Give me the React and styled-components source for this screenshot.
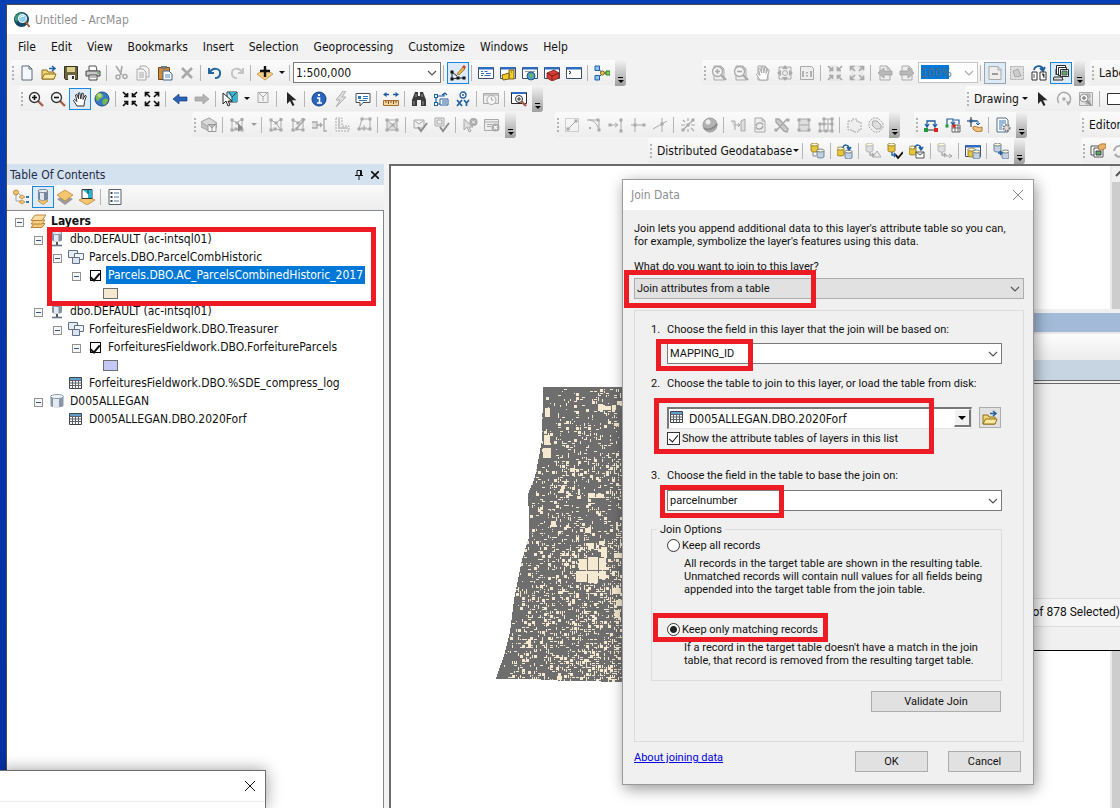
import React from 'react';
import styled, { createGlobalStyle, css } from 'styled-components';

const UI = '"DejaVu Sans Condensed", "Noto Sans", sans-serif';
const DLG = 'Roboto, "Noto Sans", sans-serif';

const Global = createGlobalStyle`
  * { box-sizing: border-box; }
  body { margin: 0; font: 12px/18px ${UI}; color: #111; background: #0538ae; }
  button, input, select { font: inherit; color: inherit; }
`;

/* ---------- icons ---------- */
const G = '#a9a9a9';
const L = '#dedede';
const B = '#1f5f9f';
const K = '#2b2b2b';

const page = (stroke, fill) => <path d="M3 1h7l3 3v11H3zM10 1v3h3" fill={fill} stroke={stroke} />;
const lens = (sign, rim, handle) => (
  <>
    <path d="M10 10l5 5" stroke={handle} strokeWidth="2.4" />
    <circle cx="6.5" cy="6.5" r="5" fill="#f4f4f4" stroke={rim} strokeWidth="1.3" />
    <path d={sign} stroke={rim === G ? G : '#111'} strokeWidth="1.6" />
  </>
);
const hand = (c) => (
  <path d="M5 15L1.500 9.500l1.300-1L5 10.500 3.500 4l1.400-.6L6.700 8 6.300 2l1.500-.2L8.800 8l1-5.800 1.500.2-.3 6 2-4 1.300.6-1.800 5.500L12 15z" fill="#fff" stroke={c} />
);
const inward = (c) => (
  <path d="M1 1l4 4M2 5.500h3.500V2M15 1l-4 4M14 5.500h-3.500V2M1 15l4-4M2 10.500h3.500V14M15 15l-4-4M14 10.500h-3.500V14" fill="none" stroke={c} strokeWidth="1.700" />
);
const outward = (c) => (
  <path d="M6 6L2 2M5.500 1.500h-4v4M10 6l4-4M10.500 1.500h4v4M6 10l-4 4M5.500 14.500h-4v-4M10 10l4 4M10.500 14.500h4v-4" fill="none" stroke={c} strokeWidth="1.700" />
);
const left = (c, s) => <path d="M1 8l6-5v3h8v4H7v3z" fill={c} stroke={s} strokeWidth=".7" />;
const right = (c, s) => <path d="M15 8L9 3v3H1v4h8v3z" fill={c} stroke={s} strokeWidth=".7" />;
const cursor = (c) => <path d="M4 1v12l3-3 2.500 5 2-1L9 9.200h4.500z" fill={c} />;
const win = (inner) => (
  <>
    <path d="M.5 2.500h15v11H.5z" fill="#fff" stroke="#3b4d6b" />
    <path d="M1 2h14v2.500H1z" fill="#2f6cc0" />
    {inner}
  </>
);
const can = (x, y, c, s) => (
  <>
    <path d={`M${x} ${y + 1.500}v6c0 2 7 2 7 0v-6z`} fill={c} stroke={s} strokeWidth=".8" />
    <ellipse cx={x + 3.500} cy={y + 1.500} rx="3.500" ry="1.500" fill="#fff8d8" stroke={s} strokeWidth=".8" />
  </>
);
const Y = ['#e8c63a', '#84691a'];
const S = ['#c3d2e2', '#54687d'];
const GR = [L, G];
const sq = (pts, c, s = 3) => pts.map(([x, y], i) => <rect key={i} x={x - s / 2} y={y - s / 2} width={s} height={s} fill={c} />);
const poly = (extra) => (
  <>
    <path d="M3 3l5 3 5-4 0 11-6-1-4 2z" fill="none" stroke={G} />
    {sq([[3, 3], [8, 6], [13, 2.500], [13, 13], [7, 12], [3, 13]], G)}
    {extra}
  </>
);
const check = (c) => <path d="M6 10l3 4 6-8" fill="none" stroke={c} strokeWidth="2" />;
const crossDot = <><circle cx="11.500" cy="10.500" r="4" fill={G} /><path d="M10 9l3 3M13 9l-3 3" stroke="#fff" strokeWidth="1.200" /></>;
const folder = (
  <>
    <path d="M1 14V5h5l1 2h6v7z" fill="#f1d774" stroke="#8d6f1c" />
    <path d="M1 14l2.500-5H15l-2 5z" fill="#fbe89a" stroke="#8d6f1c" />
    <path d="M8 3.500h5M11 1l3 2.500L11 6" fill="none" stroke={B} strokeWidth="1.500" />
  </>
);
const dbArrow = (c) => <path d="M5 9v3h3M7 10l2 2-2 2" fill="none" stroke={c} strokeWidth="1.300" />;
const loop = <path d="M6 5c0-4 6-4 6 1M10 4l2 3 2-3" fill="none" stroke={B} strokeWidth="1.500" />;

const ICONS = {
  new: <path d="M3 1h7l3 3v11H3zM10 1v3h3" fill="#f4f9ff" stroke="#5c6b7b" />,
  open: folder,
  save: <><path d="M1.500 1.500h13v13h-12l-1-1z" fill="#6d6340" stroke="#37321f" /><path d="M4 2h8v5H4z" fill="#d9cf8f" /><path d="M5 10h7v5H5z" fill="#efefef" /><path d="M9 11h2v3H9z" fill={K} /></>,
  print: <><path d="M4 1h7l1 5H4z" fill="#fff" stroke="#555" /><path d="M1 6h14v5H1z" fill="#c9c9c9" stroke="#444" /><path d="M4 10h8v5H4z" fill="#fff" stroke="#444" /><path d="M5 12h6" stroke="#777" /><path d="M12 8h2" stroke="#3da23d" /></>,
  cut: <><path d="M3 1l6 9M9 1l-1.500 9" stroke={G} strokeWidth="1.600" /><circle cx="5" cy="12" r="2" fill="none" stroke={G} strokeWidth="1.500" /><circle cx="12" cy="11.500" r="2" fill="none" stroke={G} strokeWidth="1.500" /></>,
  copy: <><path d="M5 1h6l3 3v8H5z" fill="#f3f3f3" stroke={G} /><path d="M2 4h6l3 3v8H2z" fill="#f3f3f3" stroke={G} /><path d="M4 8h5M4 10h5M4 12h5" stroke={G} /></>,
  paste: <><path d="M1.500 2.500h11v12h-11z" fill="#cf8a3c" stroke="#74491a" /><path d="M4 1h6v3H4z" fill="#777" /><path d="M6 6h6l3 3v6H6z" fill="#fff" stroke="#3a628e" /><path d="M8 10h5M8 12h5" stroke="#4b86c6" /></>,
  del: <path d="M3 3l10 10M13 3L3 13" stroke={G} strokeWidth="2.600" />,
  undo: <path d="M2 3v5h5M3 7c3-5 11-4 10 2-.2 3-3 4-5 4" fill="none" stroke="#25659f" strokeWidth="2" />,
  redo: <path d="M14 3v5H9M13 7C10 2 2 3 3 9c.2 3 3 4 5 4" fill="none" stroke="#c4c4c4" strokeWidth="2" />,
  add: <><path d="M0 9l8-5 8 5-8 6z" fill="#f6cf86" stroke="#c08a3a" strokeWidth=".8" /><path d="M8 1v11M3 6h10" stroke="#111" strokeWidth="2.400" /></>,
  editor: <><path d="M2 7v7l6-1h6M2 7l5 4" fill="none" stroke="#222" />{sq([[2, 7], [2, 14], [8, 13], [14, 13]], '#111')}<path d="M7 9l6-7 2 2-6 6z" fill="#f0b64b" stroke="#7c5a1c" strokeWidth=".7" /><path d="M12 2l2-2 2 2-1.500 2z" fill="#c94a35" /></>,
  toc: win(<path d="M3 6.500h2M6.500 6.500h3M3 8.500h3M8 8.500h5M3 10.500h2M6.500 10.500h6" stroke="#2f6cc0" strokeWidth="1.200" />),
  catalog: win(<><path d="M9 5h5v9H9z" fill="#f2cb2c" stroke="#7b6413" /><path d="M2 10l7-2v6l-6 1z" fill="#f0c92c" stroke="#7b6413" /><path d="M11 7h1" stroke="#7b6413" /></>),
  search: win(<><path d="M3 6.500h10" stroke="#999" /><circle cx="9" cy="11" r="4" fill="#4a9ad6" stroke="#2a5b86" /><path d="M7 10l3-2 1 3-2 2z" fill="#6dbb4d" /></>),
  toolbox: win(<><path d="M3 8l7-3 5 3v5l-7 3-5-3z" fill="#d23c33" stroke="#7e1a15" strokeWidth=".8" /><path d="M3 8l5 3 7-3M8 11v4" fill="none" stroke="#7e1a15" /></>),
  python: win(<path d="M3 6l2 1.500L3 9" fill="none" stroke="#111" />),
  model: <><path d="M4 4l5 4-5 5M9 8h5" fill="none" stroke="#1a3c66" /><path d="M1 1h4.500v4.500H1zM1 10.500h4.500V15H1z" fill="#8fc2f2" stroke="#1f5fa5" /><circle cx="8.500" cy="8" r="2" fill="#f3c54a" stroke="#80611a" /><path d="M12 6h4v4h-4z" fill="#7fcf63" stroke="#2f7a22" /></>,
  zin: lens('M4 6.500h5M6.500 4v5', '#333', '#a6604b'),
  zout: lens('M4 6.500h5', '#333', '#a6604b'),
  hand: hand('#333'),
  globe: <><circle cx="8" cy="8" r="7" fill="#3479c8" stroke="#1b4a85" /><path d="M4 2c4 0 6 2 5 4S5 7 5 9s-2 1-3-1 0-5 2-6zM10 8c3-1 4 0 4 1s-2 5-4 5-2-5 0-6z" fill="#7bb948" /><circle cx="5.500" cy="4.500" r="2" fill="#fff" opacity=".45" /></>,
  fin: inward('#111'),
  fout: outward('#111'),
  back: left('#2b62b8', '#173f80'),
  fwd: right('#b4b4b4', '#9a9a9a'),
  select: <><path d="M5 1h10v10H5z" fill="#bff0f7" stroke="#333" /><path d="M5 1l5 5v5h5V1z" fill="#31b7d4" /><path d="M7 1l3 5 5-5M10 6v5" fill="none" stroke="#444" /><path d="M1 2v11l3-3 2 5 2-1-2-4h4z" fill="#fff" stroke="#222" /></>,
  clear: <path d="M3 1.500h10v10H3zM4 2l4 4 4-4M8 6v4" fill="#f1f1f1" stroke={G} />,
  pointer: cursor('#262626'),
  info: <><circle cx="8" cy="8" r="7" fill="#2b63c0" stroke="#173c80" /><path d="M6 7h2.500v5M6 12h5" fill="none" stroke="#fff" strokeWidth="1.600" /><path d="M7 3h2v2H7z" fill="#fff" /></>,
  bolt: <path d="M10 0L3 9h4l-4 7 10-10H9l4-6z" fill={L} stroke={G} strokeWidth=".9" />,
  popup: <><path d="M1 2.500h14v9H8L5 15v-3.500H1z" fill="#fff" stroke="#4a5158" /><path d="M3 5h3v3H3z" fill="#2c76bd" /><path d="M8 5.500h5M8 7.500h5M4 9.500h8" stroke="#2c76bd" /></>,
  measure: <><path d="M0 3.500L3.500 1v5zM16 3.500L12.500 1v5z" fill={B} /><path d="M2 3.500h4M10 3.500h4" stroke={B} strokeWidth="1.600" /><path d="M.5 9.500h15v5H.5z" fill="#f6d79d" stroke="#a36d2d" /><path d="M3 10v2M5.500 10v3M8 10v2M10.500 10v3M13 10v2" stroke="#7a4d1a" /></>,
  find: <><path d="M4 1h3v4h2V1h3l3 8v6h-5V9H6v6H1V9z" fill="#3b3b3b" /><path d="M5 3v3M11 3v3M3 10v4M12 10v4" stroke="#9b9b9b" /></>,
  route: <><path d="M3 5v8h4M3 5h8V2M9 4l3-2 2 2" fill="none" stroke={B} strokeWidth="1.200" /><path d="M7 8h8v6H7z" fill="#fff" stroke={B} /><path d="M9 10h5M9 12h5" stroke={B} />{sq([[3, 5], [3, 13]], B, 4)}{sq([[3, 5], [3, 13]], '#fff', 2)}</>,
  xy: <><circle cx="8" cy="4" r="3" fill="#fff" stroke={B} strokeWidth="1.300" /><circle cx="8" cy="4" r="1" fill={B} /><path d="M2 9l5 6M7 9l-5 6M9 9l2.500 3L14 9M11.500 12v3" fill="none" stroke={B} strokeWidth="1.700" /></>,
  time: <><path d="M.5 2.500h15v10H.5zM1 4h14" fill="#eee" stroke={G} /><circle cx="8.500" cy="9" r="4.500" fill="#f5f5f5" stroke={G} /><path d="M8.500 6v3h2" fill="none" stroke={G} /></>,
  viewer: <><path d="M.5 1.500h15v11H.5z" fill="#fff" stroke={K} /><path d="M1 1h14v2H1z" fill="#2f6cc0" /><path d="M10 10l5 5" stroke="#b0563f" strokeWidth="2.400" /><circle cx="8" cy="8" r="3.500" fill="#fff" stroke={K} /><path d="M6 8h4M8 6v4" stroke={K} /></>,
  gpage: <><path d="M0 10l8 4 8-4V6L8 1 0 5z" fill="#c2c2c2" stroke={G} /><path d="M0 5l8-4 8 5-8 4z" fill="#dadada" stroke={G} /><path d="M7 7.500h8v7H7zM8 8l3 3 3-3M11 11v3" fill="#f4f4f4" stroke="#999" /></>,
  edsel: poly(<path d="M9 6v9l5-4z" fill="#888" />),
  ed1: poly(<path d="M8 6l5 7" stroke={G} />),
  ed2: poly(<path d="M15 2L6 12" stroke={G} strokeWidth="1.800" />),
  ed3: <><path d="M0 5h5v6H0z" fill={L} /><path d="M0 5h5v6H0M5 8h5M8 6l2 2-2 2M15 2h-3v12h3" fill="none" stroke={G} strokeWidth="1.300" /></>,
  ed4: <><path d="M2 1v13h13V9H8V1z" fill="none" stroke={G} strokeDasharray="2 1" /><path d="M5 2v9h9" fill="none" stroke="#c6c6c6" strokeWidth="2" /></>,
  ed5: <><path d="M3 12L6 2h8v10H3M8 8v6M5 11h6" fill="none" stroke={G} />{sq([[6, 2], [14, 2], [14, 12], [3, 12]], G)}</>,
  topo: <><path d="M3 3h10v10H3zM3 3l6 5 4-5M3 13l6-5 4 5" fill={L} stroke={G} />{sq([[3, 3], [13, 3], [3, 13], [13, 13], [9, 8]], G)}</>,
  val1: <><path d="M2 3h10v8H2zM3 4l4 3 4-3" fill="#eee" stroke={G} />{check('#8f8f8f')}</>,
  val2: <><path d="M1 1h9v8H1zM3 3h5v4H3z" fill="#eee" stroke={G} />{check('#8f8f8f')}</>,
  err1: <><path d="M2 2v11l3-3 2 5 2-1-2-4h4z" fill={L} stroke={G} /><circle cx="11.500" cy="5" r="4" fill={G} /><path d="M10 3.500l3 3M13 3.500l-3 3" stroke="#fff" /></>,
  err2: <><path d="M.5 2.500h14v11H.5zM1 5h13M3 7.500h5M3 9.500h4" fill="#eee" stroke={G} />{crossDot}</>,
  seg: <><path d="M1.500 1.500h13v13h-13z" fill="none" stroke={G} strokeDasharray="1 1" /><path d="M4 12l8-8" stroke={G} />{sq([[4, 12], [12, 4]], G)}</>,
  arc: <><path d="M1 3c6-1 11 4 12 11M3 3h10v10" fill="none" stroke={G} />{sq([[12, 3], [13, 13]], G)}{sq([[4, 11]], G, 2)}</>,
  ext: <><path d="M1 8h8M7 6l3 2-3 2M13 2v12" fill="none" stroke={G} />{sq([[2, 8], [13, 3], [13, 14]], G)}</>,
  trim: <><path d="M5 1v14M1 8h14" fill="none" stroke={G} />{sq([[5, 8], [14, 8]], G)}</>,
  inter: <><path d="M1 12L15 4M10 1v14" stroke={G} />{sq([[10, 7]], G)}</>,
  explode: <><path d="M1 8h4M11 8h4M8 1v3M8 12v3M3 13L13 3M3 3l2 2M11 11l3 3" stroke={G} strokeWidth="1.200" />{sq([[13, 3], [3, 13], [8, 8]], G)}</>,
  sphere: <><circle cx="8" cy="8" r="7" fill="#b3b3b3" stroke="#9c9c9c" /><path d="M2 11c4 3 10 1 13-4" fill="none" stroke="#8a8a8a" strokeWidth="2" /><circle cx="6" cy="5" r="2.500" fill="#ececec" /></>,
  split: <path d="M1 4h4v9M5 8h5M8 6l2 2-2 2M11 4l4-2v12h-4z" fill={L} stroke={G} />,
  rotpage: <>{page(G, '#efefef')}<path d="M4 9c1-4 6-4 7-1M11 9c-1 4-6 4-7 1" fill="none" stroke={G} strokeWidth="1.500" /></>,
  pencils: <><path d="M2 2h3l9 10-1 3-3-1L2 5zM13 2L3 13" fill="#ccc" stroke={G} strokeWidth="1.500" />{sq([[2, 13], [14, 3]], G)}</>,
  rows: <><path d="M3 2h10v12H3zM3 8h10" fill={L} stroke={G} />{sq([[3, 3], [13, 3], [3, 13], [13, 13]], G)}</>,
  mesh: <><path d="M6 2h8v12M14 2v12H2V7h12M6 2v12M10 2v12" fill="none" stroke={G} />{sq([[6, 2], [14, 2], [2, 7], [6, 7], [14, 7], [2, 14], [8, 14], [14, 14]], G)}</>,
  shape1: <path d="M2 4h4V2h5v3h4v8h-3v2H7v-2H2z" fill="#eee" stroke={G} strokeDasharray="2 1" />,
  shape2: <><path d="M5 1h5l5 5v5l-4 4H6L1 10V5z" fill="#eee" stroke={G} strokeDasharray="2 1" /><path d="M5 4h4l4 4v3l-2 1H8L4 8z" fill={L} stroke={G} /></>,
  adj1: <><path d="M4 10V4h8v6M2 7l2 3 2-3M10 7l2 3 2-3" fill="none" stroke={B} strokeWidth="1.300" /><path d="M4 13h8" stroke="#333" />{sq([[3, 13]], '#1c9b38', 4)}{sq([[13, 13]], '#d22', 4)}</>,
  adj2: <><path d="M2 8V2h6v5M6 5l2 3 2-3M9 3h5v4" fill="none" stroke={B} strokeWidth="1.200" /><path d="M7 8h8v7H7zM7 11h8M10 8v7M13 8v7" fill="#fff" stroke="#666" />{sq([[2, 9]], '#1c9b38')}{sq([[9, 9]], '#d22')}</>,
  adj3: <><path d="M4 0v10M0 4h10" stroke="#222" /><path d="M5 4h6v4M9 6l2 2 2-2" fill="none" stroke={B} /><path d="M6 10c3-2 5 2 9 0v4c-3 1-7 1-9-2z" fill="#f2c27c" stroke="#b17a30" />{sq([[4, 4]], B)}</>,
  script: <><path d="M2 1h9l2 2v12H2z" fill="#fff" stroke="#53708f" /><path d="M4 4h7M4 6h7M4 8h4M4 10h3M4 12h3" stroke="#3274b5" /><circle cx="11.500" cy="11" r="3" fill="#ddd" stroke="#777" strokeWidth="2" strokeDasharray="1.500 1" /></>,
  pzin: <>{page(G, '#eee')}{lens('M4 6.500h5M6.500 4v5', G, G)}</>,
  pzout: <>{page(G, '#eee')}{lens('M4 6.500h5', G, G)}</>,
  phand: <>{page(G, '#eee')}{hand(G)}</>,
  pfull: <><path d="M2 2h12v12H2z" fill="#eee" stroke={G} /><path d="M8 0l3 4H5zM8 16l3-4H5zM0 8l4-3v6zM16 8l-4-3v6z" fill={G} /><circle cx="8" cy="8" r="2.500" fill="none" stroke={G} /></>,
  p11: <><path d="M1.500 1.500h11l2 2v11h-13z" fill="#eee" stroke={G} /><path d="M4 6v6M12 6v6M8 7v1.500M8 10v1.500" stroke={G} strokeWidth="1.800" /></>,
  pin: <>{page(L, '#eee')}{inward(G)}</>,
  pout: <>{page(L, '#eee')}{outward(G)}</>,
  pback: <>{page(G, '#eee')}{left('#b9b9b9', '#999')}</>,
  pfwd: <>{page(G, '#eee')}{right('#b9b9b9', '#999')}</>,
  dframe: <><path d="M2 1.500h9l3 3v10H2zM11 2v3h3" fill="#eee" stroke={G} /><path d="M5 9h6" stroke="#888" strokeWidth="1.600" /></>,
  focus: <><path d="M1.500 1.500h13v13h-13z" fill={L} stroke={G} strokeDasharray="2 1" /><path d="M4 6l5-2 3 7-6 1z" fill="#ccc" stroke={G} /></>,
  swap: <><path d="M3 5c1-5 8-5 9-1M9 3l3 3 2-4" fill="none" stroke={B} strokeWidth="1.800" /><path d="M1 7h5v8H1zM9 7h6v8H9z" fill="#fff" stroke="#333" /><path d="M3 9v4M11 9h2v4" stroke="#555" /></>,
  ddp: <><path d="M3.500 .5h9v9h-9z" fill="#fff" stroke={K} /><path d="M5.500 2.500h8v8h-8z" fill="#fff" stroke={K} /><path d="M7.500 4.500h8v7h-8z" fill="#fff" stroke={K} /><path d="M9 6h5v4H9z" fill="#63ac5a" stroke="#456" /><path d="M3 4v6M1 12h8l1 3H0z" fill="#ddd" stroke={K} /></>,
  rotate: <><path d="M3 12a6.500 6.500 0 1 1 9 1" fill="none" stroke={G} strokeWidth="1.500" /><path d="M10 10l5 1-3 4z" fill={G} />{sq([[8, 8]], G)}</>,
  gridzoom: <><path d="M1.500 1.500h13v13h-13z" fill="#e5e5e5" stroke={G} /><path d="M8 3h4v4H8zM8 9h4v4H8z" fill="#bbb" stroke={G} /><circle cx="6" cy="7" r="4" fill="#f2f2f2" stroke="#999" /><path d="M4 7h4M6 5v4M9 10l4 4" stroke="#888" strokeWidth="1.500" /></>,
  square: <path d="M1.500 2.500h13v11h-13z" fill="#fff" stroke="#333" />,
  g1: <>{can(2, 0, ...Y)}{can(8, 6, ...S)}<path d="M4 9v4h3" fill="none" stroke="#888" /></>,
  g2: <>{can(0, 4, ...Y)}{can(8, 7, ...S)}{loop}</>,
  g3: <>{can(1, 0, ...GR)}{dbArrow(G)}<path d="M12 8l4 6H8z" fill="#eee" stroke={G} /></>,
  g4: <>{can(1, 0, ...Y)}{dbArrow(B)}<path d="M9 12l2 3 5-6" fill="none" stroke="#111" strokeWidth="1.800" /></>,
  g5: <>{can(0, 3, ...Y)}{loop}<path d="M7 9h8v6H7zM7 9l4 3 4-3" fill="#fff" stroke="#555" /></>,
  g6: <>{can(1, 0, ...GR)}{dbArrow(G)}<path d="M9 13h6M12 11l3 2-3 2" fill="none" stroke={G} /></>,
  g7: win(<>{can(3, 5, ...Y)}{can(8, 7, ...S)}</>),
  g8: <>{can(1, 0, ...S)}{can(9, 7, ...S)}<path d="M5 10h4M7 8l2 2-2 2" fill="none" stroke={B} strokeWidth="1.500" /></>,
  pages: <><path d="M1 3h8v9H1z" fill="#fff" stroke="#555" /><path d="M4 5h9v9H4z" fill="#fff" stroke="#555" /><path d="M6 8h5v4H6z" fill="#5ca95a" stroke="#345" /><path d="M8 3c3-3 5-2 8-2v4c-3 1-4 3-7 2z" fill="#e9b26b" stroke="#935b1b" strokeWidth=".7" /></>,
  refresh: <path d="M2 8c1-6 9-7 11-2M14 2v5H9M14 9c-2 6-9 6-11 2" fill="none" stroke={G} strokeWidth="2" />,
  byorder: <><path d="M3 6v6h5M6 5l4 3" fill="none" stroke="#98a7b5" /><circle cx="3" cy="3.500" r="2.500" fill="#f5c56f" stroke="#bd8a3b" /><path d="M6 8l3-2 3 2-3 2zM6 13l3-2 3 2-3 2z" fill="#f5c56f" stroke="#bd8a3b" strokeWidth=".8" /><path d="M13 8h3M13 13h3" stroke="#2476c0" strokeWidth="2" /></>,
  bysource: <><path d="M3 12l5 3.500 5-3.500-2-2H5z" fill="#f5c56f" stroke="#bd8a3b" strokeWidth=".8" /><path d="M3 2v8c0 2 10 2 10 0V2z" fill="#76869a" /><path d="M5 3v7.500c1 .6 3 .6 4 .6V3z" fill="#dfe6ee" /><ellipse cx="8" cy="2" rx="5" ry="1.600" fill="#eef2f7" stroke="#76869a" /></>,
  byvis: <><path d="M0 10l8-4 8 4-8 6z" fill="#9a9a9a" /><path d="M0 6l8-5 8 5-8 6z" fill="#f5c56f" stroke="#bd8a3b" strokeWidth=".8" /></>,
  bysel: <><path d="M0 11l8-4 8 4-8 5z" fill="#f5c56f" stroke="#bd8a3b" strokeWidth=".8" /><path d="M3 .5h10v9H3z" fill="#fff" stroke="#333" /><path d="M4 1l5 4v4h4V1z" fill="#26b5d0" /><path d="M9 5V1" stroke="#333" /></>,
  options: <><path d="M2 .5h12v15H2z" fill="#fff" stroke="#555f6b" /><path d="M7 4h5M7 8h5M7 12h5" stroke="#4a78a8" />{sq([[4.500, 4], [4.500, 8], [4.500, 12]], '#444', 2)}</>,
  layers: <><path d="M1 14.500l3-4h11l-3 4z" fill="#f4c777" stroke="#b37f2e" strokeWidth=".9" /><path d="M1 11l3-4h11l-3 4z" fill="#f7cf85" stroke="#b37f2e" strokeWidth=".9" /><path d="M1 7.500l4-5.500h11l-4 5.500z" fill="#fbdca0" stroke="#b37f2e" strokeWidth=".9" /></>,
  sde: <><path d="M3 2v7c0 2 10 2 10 0V2z" fill="#8291a3" /><path d="M5 2v8c1 .6 3 .6 4.500 .6V2z" fill="#e3e9f0" /><ellipse cx="8" cy="2" rx="5" ry="1.500" fill="#f2f5f8" stroke="#8291a3" /><path d="M8 11v3" stroke="#555" strokeWidth="2" /><path d="M3 14.500h10" stroke="#68747f" strokeWidth="1.600" /></>,
  fds: <><path d="M.5 1.500h9v7h-9z" fill="#e6ecf4" stroke="#5f7187" /><path d="M6.500 4.500h9v6h-9z" fill="#f1f5fa" stroke="#5f7187" /><path d="M4.500 8.500h7v6h-7z" fill="#dbe4ef" stroke="#5f7187" /></>,
  table: <><path d="M1.500 2.500h12v11h-12z" fill="#fff" stroke="#3f4449" /><path d="M2 3h11v2H2z" fill="#5fa0cf" /><path d="M1.500 5.500h12M1.500 8h12M1.500 10.500h12M4.500 5v8M7.500 5v8M10.500 5v8" stroke="#5c6268" /></>,
  db: <><path d="M1.500 3.500v9c0 2.500 13 2.500 13 0v-9z" fill="#8796a8" /><path d="M4 4v10c2 .7 4 .7 6 .5V4z" fill="#e3e9f0" /><ellipse cx="8" cy="3.500" rx="6.500" ry="2" fill="#f4f7fa" stroke="#8796a8" /></>,
};

const Svg = styled.svg`
  display: block;
  flex: none;
  width: 16px;
  height: 16px;
`;
const Icon = ({ name }) => <Svg viewBox="0 0 16 16" aria-hidden="true">{ICONS[name]}</Svg>;
const ChevronSvg = styled.svg`
  position: absolute;
  right: 4px;
  top: 50%;
  width: 10px;
  height: 6px;
  margin-top: -3px;
  pointer-events: none;
`;
const Chevron = ({ color = '#555' }) => (
  <ChevronSvg viewBox="0 0 10 6" aria-hidden="true"><path d="M1 1l4 4 4-4" fill="none" stroke={color} strokeWidth="1.200" /></ChevronSvg>
);

/* ---------- window frame ---------- */
const Desktop = styled.div`
  position: relative;
  display: flex;
  min-height: 100vh;
  padding: 4px 0 0 6px;
  overflow: hidden;
  background: linear-gradient(#0740b5, #0436ab 40%, #0330a0);
`;
const MainWindow = styled.main`
  display: flex;
  flex: 1;
  flex-direction: column;
  min-width: 0;
  border: solid #4a4a4a;
  border-width: 1px 0 0 1px;
  background: #f2f2f2;
`;
const TitleBar = styled.header`
  display: flex;
  align-items: center;
  gap: 5px;
  height: 29px;
  padding-left: 7px;
  color: #8f8f8f;
  background: #fff;
`;
const Logo = styled.svg`
  width: 16px;
  height: 16px;
`;
const MenuBar = styled.nav`
  display: flex;
  align-items: center;
  height: 26px;
  padding-left: 3px;
`;
const MenuButton = styled.button`
  padding: 0 7px 0 8px;
  border: 0;
  background: none;
`;

/* ---------- toolbars ---------- */
const Toolbars = styled.div`
  display: flex;
  flex-direction: column;
  overflow: hidden;
`;
const ToolbarRow = styled.div`
  display: flex;
  height: 26px;
  padding-left: ${(p) => p.$indent}px;
`;
const Strip = styled.div`
  display: flex;
  flex: none;
  align-items: center;
  height: 25px;
  margin-right: ${(p) => p.$after || 0}px;
  border-radius: 3px;
  background: linear-gradient(#fbfbfb, #ededed);
`;
const Grip = styled.span`
  width: 2px;
  height: 14px;
  margin: 0 2px;
  background: repeating-linear-gradient(#b4b4b4 0 2px, transparent 2px 4px);
`;
const ToolButton = styled.button`
  display: grid;
  flex: none;
  place-items: center;
  width: 22px;
  height: 22px;
  padding: 0;
  border: 1px solid ${(p) => (p.$on ? (p.$dim ? '#9aa5af' : '#1a86dc') : 'transparent')};
  background: ${(p) => (p.$on ? '#dcebf7' : 'none')};
`;
const Separator = styled.span`
  width: 1px;
  height: 16px;
  margin: 0 3px 0 2px;
  background: #b5b5b5;
`;
const ArrowButton = styled.button`
  flex: none;
  width: 11px;
  height: 22px;
  padding: 0;
  border: 0;
  background: none;
  &::before {
    content: '';
    display: block;
    width: 0;
    margin: 0 auto;
    border: 3px solid transparent;
    border-top-color: ${(p) => (p.$dim ? '#9a9a9a' : '#111')};
    border-bottom: 0;
  }
`;
const Overflow = styled.button`
  align-self: flex-start;
  width: 11px;
  height: 26px;
  margin-left: 2px;
  padding: 0;
  border: 0;
  border-radius: 0 3px 3px 0;
  background: linear-gradient(#f2f2f2, #9f9f9f);
  &::before {
    content: '';
    display: block;
    width: 5px;
    height: 1px;
    margin: 13px auto 2px;
    background: #000;
  }
  &::after {
    content: '';
    display: block;
    width: 0;
    margin: 0 auto;
    border: 3px solid transparent;
    border-top-color: #000;
    border-bottom: 0;
  }
`;
const LabelButton = styled.button`
  display: flex;
  align-items: center;
  gap: ${(p) => (p.$tight ? 1 : 3)}px;
  height: 22px;
  padding: 0 ${(p) => (p.$tight ? 1 : 3)}px 0 3px;
  border: 0;
  background: none;
  white-space: nowrap;
  &::after {
    content: '';
    border: 3px solid transparent;
    border-top-color: #111;
    border-bottom: 0;
  }
`;
const ComboBox = styled.div`
  position: relative;
  flex: none;
  width: ${(p) => p.$w}px;
  height: 21px;
  & > select, & > input {
    display: block;
    width: 100%;
    height: 100%;
    padding: 0 2px;
    border: 1px solid ${(p) => (p.$dim ? '#c4c4c4' : '#7a7a7a')};
    border-radius: 0;
    appearance: none;
    color: ${(p) => (p.$dim ? '#5b6b80' : '#111')};
    background: #fff;
  }
  & > input {
    background: linear-gradient(#0078d7, #0078d7) 2px 2px / 28px 14px no-repeat, #fff;
  }
`;

function Tools({ items }) {
  return items.map((it, i) => {
    if (React.isValidElement(it)) return React.cloneElement(it, { key: i });
    if (it === '|') return <Separator key={i} />;
    if (it === '>' || it === '>g') return <ArrowButton key={i} aria-label="More" $dim={it === '>g'} />;
    if (it === '>>') return <Overflow key={i} aria-label="Toolbar options" />;
    const on = it[0] === '*' || it[0] === '~';
    const name = on ? it.slice(1) : it;
    return <ToolButton key={i} aria-label={name} $on={on} $dim={it[0] === '~'}><Icon name={name} /></ToolButton>;
  });
}
const Toolbar = ({ items, after }) => (
  <Strip role="toolbar" $after={after}><Grip /><Tools items={items} /></Strip>
);
const ScaleBox = () => (
  <ComboBox $w={148}>
    <select aria-label="Map scale" defaultValue="1:500,000"><option>1:500,000</option></select>
    <Chevron />
  </ComboBox>
);
const ZoomBox = () => (
  <ComboBox $w={60} $dim>
    <input aria-label="Page zoom" defaultValue="100%" />
    <Chevron color="#aaa" />
  </ComboBox>
);

/* ---------- table of contents ---------- */
const Workspace = styled.div`
  display: flex;
  flex: 1;
  min-height: 0;
`;
const Toc = styled.aside`
  display: flex;
  flex: none;
  flex-direction: column;
  width: 377px;
  margin-right: 5px;
`;
const TocHeader = styled.div`
  display: flex;
  align-items: center;
  height: 21px;
  padding: 0 1px 0 3px;
  color: #1d2b45;
  background: #d4e2f0;
`;
const TocTitle = styled.span`
  flex: 1;
`;
const HeaderButton = styled.button`
  display: grid;
  place-items: center;
  width: 16px;
  height: 16px;
  padding: 0;
  border: 0;
  background: none;
`;
const Glyph = styled.svg`
  display: block;
  width: ${(p) => p.$s || 10}px;
  height: ${(p) => p.$s || 10}px;
`;
const TocTools = styled.div`
  display: flex;
  align-items: center;
  height: 25px;
  padding: 0 0 1px 3px;
  background: linear-gradient(#fafafa, #ededed);
`;
const Tree = styled.div`
  position: relative;
  flex: 1;
  padding-top: 1px;
  border: 1px solid #828790;
  border-width: 1px 1px 0 0;
  background: #fff;
`;
const TreeRow = styled.div`
  display: flex;
  align-items: center;
  height: 18px;
  padding-left: ${(p) => 8 + 19 * p.$depth}px;
  white-space: nowrap;
`;
const Expander = styled.button`
  width: 9px;
  height: 9px;
  margin: 2px 6px 0 0;
  padding: 0;
  border: 1px solid #919191;
  background: #f7f7f7;
  visibility: ${(p) => (p.$hidden ? 'hidden' : 'visible')};
  &::before {
    content: '';
    display: block;
    height: 1px;
    margin: 0 1px;
    background: #33558a;
  }
`;
const RowLabel = styled.label`
  margin-left: 3px;
  padding: 0 2px;
  ${(p) => p.$bold && css`font-weight: bold;`}
  ${(p) => p.$selected && css`color: #fff; background: #0078d7;`}
`;
const CheckBox = styled.input`
  appearance: none;
  flex: none;
  width: ${(p) => (p.$thin ? 13 : 11)}px;
  height: ${(p) => (p.$thin ? 13 : 11)}px;
  margin: 0;
  border: 1px solid ${(p) => (p.$thin ? '#333' : '#000')};
  background: #fff;
  &:checked::before {
    content: '';
    display: block;
    width: 4px;
    height: 8px;
    margin: 0 auto;
    border: solid #111;
    border-width: 0 ${(p) => (p.$thin ? 1 : 2)}px ${(p) => (p.$thin ? 1 : 2)}px 0;
    transform: rotate(40deg);
  }
`;
const CheckCell = styled.span`
  display: grid;
  place-items: center;
  width: 16px;
`;
const Swatch = styled.span`
  width: 15px;
  height: 11px;
  margin-left: 31px;
  border: 1px solid #6e6e6e;
  background: ${(p) => p.$color};
`;
const Highlight = styled.div`
  position: absolute;
  left: ${(p) => p.$box[0]}px;
  top: ${(p) => p.$box[1]}px;
  width: ${(p) => p.$box[2]}px;
  height: ${(p) => p.$box[3]}px;
  border: 5px solid #ed1c24;
  pointer-events: none;
`;

const TREE = [
  { d: 0, icon: 'layers', text: 'Layers', bold: true },
  { d: 1, icon: 'sde', text: 'dbo.DEFAULT (ac-intsql01)' },
  { d: 2, icon: 'fds', text: 'Parcels.DBO.ParcelCombHistoric' },
  { d: 3, check: true, text: 'Parcels.DBO.AC_ParcelsCombinedHistoric_2017', selected: true },
  { d: 3, swatch: '#f5ead1' },
  { d: 1, icon: 'sde', text: 'dbo.DEFAULT (ac-intsql01)' },
  { d: 2, icon: 'fds', text: 'ForfeituresFieldwork.DBO.Treasurer' },
  { d: 3, check: true, text: 'ForfeituresFieldwork.DBO.ForfeitureParcels' },
  { d: 3, swatch: '#c3c8f6' },
  { d: 2, icon: 'table', text: 'ForfeituresFieldwork.DBO.%SDE_compress_log', leaf: true },
  { d: 1, icon: 'db', text: 'D005ALLEGAN' },
  { d: 2, icon: 'table', text: 'D005ALLEGAN.DBO.2020Forf', leaf: true },
];
function TreeItem({ item, id }) {
  if (item.swatch) return <TreeRow $depth={item.d}><Swatch $color={item.swatch} /></TreeRow>;
  return (
    <TreeRow $depth={item.d}>
      <Expander aria-label="Collapse" $hidden={item.leaf} />
      {item.check ? <CheckCell><CheckBox id={id} type="checkbox" defaultChecked /></CheckCell> : <Icon name={item.icon} />}
      <RowLabel as={item.check ? 'label' : 'span'} htmlFor={item.check ? id : undefined} $bold={item.bold} $selected={item.selected}>{item.text}</RowLabel>
    </TreeRow>
  );
}

/* ---------- map ---------- */
const MapPane = styled.section`
  display: flex;
  flex: 1;
  min-width: 0;
  border: solid #6b6b6b;
  border-width: 2px 0 0 2px;
  background: #fff;
`;
const MapCanvas = styled.div`
  flex: 1;
  min-width: 0;
  overflow: hidden;
  padding: 214px 0 0 99px;
`;
const ParcelSvg = styled.svg`
  display: block;
  width: 200px;
  height: 310px;
`;
const ScrollBar = styled.div`
  flex: none;
  width: 10px;
  border-left: 2px solid #e8e8e8;
  background: #cdcdcd;
  overflow: hidden;
`;
const ScrollUp = styled.button`
  display: block;
  width: 17px;
  height: 16px;
  padding: 0 0 0 3px;
  border: 0;
  background: #f0f0f0;
`;

const BLOCKS = [
  [579, 559, 8, 11], [588, 557, 10, 13], [599, 558, 7, 12], [576, 571, 11, 11], [588, 571, 10, 12], [599, 571, 7, 8],
  [601, 547, 6, 10], [599, 541, 5, 4], [544, 435, 6, 10], [545, 408, 5, 9], [543, 448, 8, 10], [588, 543, 6, 6],
  [588, 493, 7, 5], [596, 494, 8, 4], [614, 553, 8, 5], [612, 588, 9, 6], [616, 600, 6, 6], [615, 610, 5, 8], [585, 528, 6, 5],
  [577, 496, 4, 3], [578, 489, 2, 6], [558, 491, 6, 2], [561, 486, 3, 5], [551, 521, 5, 6], [570, 468, 5, 4], [598, 404, 5, 7],
  [601, 406, 10, 4], [612, 405, 4, 5], [617, 401, 5, 4], [616, 522, 2, 8], [557, 676, 5, 4], [528, 640, 3, 8],
];
function parcels() {
  let seed = 20177;
  const rnd = () => { seed = (seed * 16807) % 2147483647; return seed / 2147483647; };
  let d = '';
  for (let y = 389; y < 680; y += 2) {
    for (let x = 498; x < 700; x += 2) {
      const south = (y - 387) / 294;
      const coast = 542 - 44 * south;
      const inland = Math.min(1, Math.max(0, (x - coast) / 60));
      const patch = 0.5 + 0.5 * Math.sin(x / 9 + Math.cos(y / 13) * 2) * Math.cos(y / 11 - x / 23);
      const p = 0.04 + 0.2 * south * Math.min(1, inland * 3) + 0.34 * inland * patch;
      if (rnd() < p) {
        const wide = rnd();
        const w = wide < 0.4 ? 3 : 1;
        const h = rnd() < 0.3 ? 3 : wide > 0.7 ? 2 : 1;
        d += `M${x} ${y}h${w}v${h}h-${w}z`;
      }
    }
  }
  BLOCKS.forEach(([x, y, w, h]) => { d += `M${x} ${y}h${w}v${h}h-${w}z`; });
  return d;
}
const PARCELS = parcels();
const COUNTY = 'M543 387H690V682H601V681H558V680L523 679H496L498 672 504 656 510 632 514 600 517 585 522 560 529 537V518L528 494 535 477 538 462 542 440Z';

/* ---------- attribute table window ---------- */
const TableWindow = styled.section`
  position: absolute;
  left: 800px;
  right: 0;
  top: 309px;
  border-bottom: 1px solid #000;
  background: #f0f0f0;
  white-space: nowrap;
`;
const TableCaption = styled.div`
  height: 19px;
  margin-top: 4px;
  background: #a3bbd8;
`;
const TableTools = styled.div`
  height: 28px;
  border-top: 2px solid #e9e9e9;
  background: linear-gradient(#fdfdfd, #ececec);
`;
const TableTab = styled.div`
  height: 20px;
  background: #c7d4e1;
`;
const TableBody = styled.div`
  height: 218px;
  border-top: 4px double #686868;
`;
const TableStatus = styled.div`
  height: 29px;
  padding-top: 4px;
  border: solid #dcdcdc;
  border-width: 1px 0;
  font-family: ${DLG};
  text-align: right;
  background: #f5f5f5;
`;
const TableFoot = styled.div`
  height: 23px;
`;

/* ---------- join dialog ---------- */
const Dialog = styled.section`
  position: absolute;
  left: 622px;
  top: 179px;
  width: 412px;
  border: 1px solid #9a9a9a;
  font: 11px/13px ${DLG};
  background: #f0f0f0;
  box-shadow: 2px 4px 14px rgba(0, 0, 0, 0.4);
`;
const DialogHeader = styled.header`
  display: flex;
  align-items: center;
  justify-content: space-between;
  height: 30px;
  padding: 0 7px 0 8px;
  font: 12px/18px ${UI};
  color: #8f8f8f;
  background: #fff;
`;
const DialogBody = styled.form`
  padding: 12px 9px 12px 11px;
`;
const Text = styled.p`
  margin: 0 0 ${(p) => p.$after || 0}px;
`;
const FieldLabel = styled.label`
  display: block;
  margin: ${(p) => p.$before || 0}px 0 ${(p) => p.$after || 0}px;
`;
const StepLabel = styled(FieldLabel)`
  display: grid;
  grid-template-columns: 16px 1fr;
`;
const SelectBox = styled.div`
  position: relative;
  height: 21px;
  margin-left: ${(p) => (p.$inset ? 16 : 0)}px;
  & > select {
    display: block;
    width: 100%;
    height: 100%;
    padding: 0 2px;
    border: 1px solid ${(p) => (p.$inset ? '#7a7a7a' : '#adadad')};
    border-radius: 0;
    appearance: none;
    background: ${(p) => (p.$inset ? '#fff' : '#e1e1e1')};
  }
`;
const Panel = styled.div`
  margin-top: 11px;
  padding: 12px 21px 29px 16px;
  border: 1px solid #dcdcdc;
`;
const TablePick = styled.div`
  display: flex;
  gap: 7px;
  margin-left: 16px;
`;
const TableSelect = styled.div`
  position: relative;
  flex: 1;
  height: 22px;
  font: 12px/18px ${UI};
  & > select {
    display: block;
    width: 100%;
    height: 100%;
    padding: 0 20px 0 20px;
    border: solid;
    border-width: 2px 1px 1px 2px;
    border-color: #777 #e3e3e3 #e3e3e3 #777;
    border-radius: 0;
    appearance: none;
    background: #fff;
  }
  & > svg {
    position: absolute;
    left: 2px;
    top: 2px;
    pointer-events: none;
  }
`;
const DropFace = styled.span`
  position: absolute;
  right: 1px;
  top: 2px;
  display: grid;
  place-items: center;
  width: 17px;
  height: 18px;
  border: solid;
  border-width: 1px 2px 2px 1px;
  border-color: #fff #777 #777 #fff;
  background: #f0f0f0;
  pointer-events: none;
  &::before {
    content: '';
    border: 4px solid transparent;
    border-top-color: #000;
    border-bottom: 0;
  }
`;
const BrowseButton = styled.button`
  display: grid;
  place-items: center;
  width: 22px;
  height: 21px;
  margin-right: 1px;
  padding: 0;
  border: 1px solid #adadad;
  background: #e1e1e1;
`;
const Option = styled.label`
  display: flex;
  align-items: center;
  gap: 2px;
  margin: ${(p) => p.$before || 0}px 0 0 16px;
`;
const Options = styled.fieldset`
  min-width: 0;
  margin: 12px 0 10px;
  padding: 3px 0 13px;
  border: 1px solid #dcdcdc;
  & > legend {
    margin-left: 5px;
    padding: 0 3px;
  }
  & ${Option} { margin-left: 15px; }
`;
const Radio = styled.input`
  appearance: none;
  width: 13px;
  height: 13px;
  margin: 0;
  border: 1px solid #333;
  border-radius: 50%;
  background: #fff;
  &:checked {
    background: radial-gradient(circle, #222 0 3px, #fff 4px);
  }
`;
const Note = styled.p`
  margin: 5px 0 0 32px;
  white-space: nowrap;
`;
const PushButton = styled.button`
  width: ${(p) => p.$w || 73}px;
  height: 21px;
  padding: 0;
  border: 1px solid #adadad;
  background: #e1e1e1;
`;
const PanelActions = styled.div`
  display: flex;
  justify-content: flex-end;
  padding-right: 1px;
`;
const Footer = styled.footer`
  display: flex;
  gap: 20px;
  margin: 9px 3px 0 0;
  & > a { margin-right: auto; color: #0000e0; }
`;

/* ---------- corner window ---------- */
const CornerWindow = styled.section`
  position: absolute;
  left: 0;
  bottom: 0;
  width: 266px;
  height: 38px;
  border: solid #6e6e6e;
  border-width: 1px 1px 0 0;
  background: #fff;
  box-shadow: 0 0 16px rgba(0, 0, 0, 0.4);
`;
const CornerHeader = styled.div`
  display: flex;
  align-items: center;
  justify-content: flex-end;
  height: 31px;
  padding-right: 7px;
  border-bottom: 1px solid #ececec;
`;
const Cross = ({ color = '#111', w = 1, size = 10 }) => (
  <Glyph $s={size} viewBox="0 0 10 10" aria-hidden="true"><path d="M0 0l10 10M10 0L0 10" stroke={color} strokeWidth={w} /></Glyph>
);

const MENUS = ['File', 'Edit', 'View', 'Bookmarks', 'Insert', 'Selection', 'Geoprocessing', 'Customize', 'Windows', 'Help'];

export default function App() {
  return (
    <>
      <Global />
      <Desktop>
        <MainWindow>
          <TitleBar>
            <Logo viewBox="0 0 16 16" aria-hidden="true">
              <circle cx="7.500" cy="7.500" r="7.500" fill="#134a68" />
              <path d="M1 5c2-4 6-5 9-4l-2 3-3 1-2 5C1 9 0 7 1 5z" fill="#3e9a73" />
              <circle cx="8.500" cy="6.500" r="4" fill="#8fd0ec" stroke="#e9f4f8" strokeWidth="1.200" />
              <path d="M6 6c1-2 3-2 4-2" fill="none" stroke="#fff" />
              <path d="M11.500 9.500l4 5.500" stroke="#b05c33" strokeWidth="2" />
            </Logo>
            Untitled - ArcMap
          </TitleBar>
          <MenuBar>{MENUS.map((m) => <MenuButton key={m}>{m}</MenuButton>)}</MenuBar>
          <Toolbars>
            <ToolbarRow $indent={3}>
              <Toolbar after={76} items={['new', 'open', 'save', 'print', '|', 'cut', 'copy', 'paste', 'del', '|', 'undo', 'redo', '|', 'add', '>', '|', <ScaleBox />, '|', '*editor', '|', 'toc', 'catalog', 'search', 'toolbox', 'python', '|', 'model', '>>']} />
              <Toolbar after={5} items={['pzin', 'pzout', 'phand', 'pfull', 'p11', '|', 'pin', 'pout', '|', 'pback', 'pfwd', <ZoomBox />, '|', '~dframe', 'focus', 'swap', '*ddp', '>>']} />
              <Toolbar items={[<LabelButton>Labeling</LabelButton>]} />
            </ToolbarRow>
            <ToolbarRow $indent={12}>
              <Toolbar after={422} items={['zin', 'zout', '*hand', 'globe', '|', 'fin', 'fout', '|', 'back', 'fwd', '|', 'select', '>', 'clear', '|', 'pointer', '|', 'info', 'bolt', 'popup', '|', 'measure', '|', 'find', 'route', 'xy', '|', 'time', '|', 'viewer', '>>']} />
              <Toolbar items={[<LabelButton>Drawing</LabelButton>, 'pointer', 'rotate', 'gridzoom', '|', 'square']} />
            </ToolbarRow>
            <ToolbarRow $indent={185}>
              <Toolbar after={39} items={['gpage', '|', 'edsel', '>g', '|', 'ed1', 'ed2', 'ed3', 'ed4', 'ed5', '|', 'topo', '|', 'val1', 'val2', '|', 'err1', 'err2', '>>']} />
              <Toolbar after={14} items={['seg', 'arc', 'ext', 'trim', 'inter', '|', 'explode', 'sphere', '|', 'split', 'rotpage', 'pencils', 'rows', 'mesh', '|', 'shape1', 'shape2', '>>']} />
              <Toolbar after={53} items={['adj1', 'adj2', 'adj3', '|', 'script', '>>']} />
              <Toolbar items={[<LabelButton>Editor</LabelButton>]} />
            </ToolbarRow>
            <ToolbarRow $indent={641}>
              <Toolbar after={56} items={[<LabelButton $tight>Distributed Geodatabase</LabelButton>, '|', 'g1', '|', 'g2', '|', 'g3', 'g4', 'g5', '|', 'g6', '|', 'g7', '|', 'g8', '>>']} />
              <Toolbar items={['pages', 'refresh']} />
            </ToolbarRow>
          </Toolbars>
          <Workspace>
            <Toc>
              <TocHeader>
                <TocTitle>Table Of Contents</TocTitle>
                <HeaderButton aria-label="Pin">
                  <Glyph viewBox="0 0 10 10" aria-hidden="true"><path d="M3 .5h4.500v5H3zM1 5.500h8M5 6v4M6.500 1v4" fill="none" stroke="#111" /></Glyph>
                </HeaderButton>
                <HeaderButton aria-label="Close contents"><Cross w={2} size={8} /></HeaderButton>
              </TocHeader>
              <TocTools><Tools items={['byorder', '*bysource', 'byvis', 'bysel', '|', 'options']} /></TocTools>
              <Tree>
                {TREE.map((t, i) => <TreeItem key={i} id={`layer-${i}`} item={t} />)}
                <Highlight $box={[40, 16, 329, 79]} />
              </Tree>
            </Toc>
            <MapPane>
              <MapCanvas>
                <ParcelSvg viewBox="490 380 200 310" shapeRendering="crispEdges" role="img" aria-label="Parcel map">
                  <clipPath id="county"><path d={COUNTY} /></clipPath>
                  <path d={COUNTY} fill="#6e6e6e" />
                  <path d={PARCELS} fill="#f5ead1" clipPath="url(#county)" />
                </ParcelSvg>
              </MapCanvas>
              <ScrollBar>
                <ScrollUp aria-label="Scroll up"><Glyph viewBox="0 0 10 10"><path d="M1 7l4-4 4 4" fill="none" stroke="#555" strokeWidth="2" /></Glyph></ScrollUp>
              </ScrollBar>
            </MapPane>
          </Workspace>
        </MainWindow>

        <TableWindow>
          <TableCaption />
          <TableTools />
          <TableTab />
          <TableBody />
          <TableStatus>(0 out of 878 Selected)</TableStatus>
          <TableFoot />
        </TableWindow>

        <Dialog role="dialog" aria-label="Join Data">
          <DialogHeader>
            Join Data
            <HeaderButton aria-label="Close dialog"><Cross color="#8a8a8a" /></HeaderButton>
          </DialogHeader>
          <DialogBody onSubmit={(e) => e.preventDefault()}>
            <Text $after={12}>
              Join lets you append additional data to this layer's attribute table so you can,<br />
              for example, symbolize the layer's features using this data.
            </Text>
            <FieldLabel htmlFor="what" $after={5}>What do you want to join to this layer?</FieldLabel>
            <SelectBox><select id="what"><option>Join attributes from a table</option></select><Chevron /></SelectBox>
            <Panel>
              <StepLabel htmlFor="field" $after={7}><span>1.</span>Choose the field in this layer that the join will be based on:</StepLabel>
              <SelectBox $inset><select id="field"><option>MAPPING_ID</option></select><Chevron /></SelectBox>
              <StepLabel htmlFor="table" $before={13} $after={17}><span>2.</span>Choose the table to join to this layer, or load the table from disk:</StepLabel>
              <TablePick>
                <TableSelect>
                  <select id="table"><option>D005ALLEGAN.DBO.2020Forf</option></select>
                  <Icon name="table" />
                  <DropFace />
                </TableSelect>
                <BrowseButton type="button" aria-label="Browse"><Icon name="open" /></BrowseButton>
              </TablePick>
              <Option $before={3}><CheckBox type="checkbox" defaultChecked $thin />Show the attribute tables of layers in this list</Option>
              <StepLabel htmlFor="key" $before={24} $after={8}><span>3.</span>Choose the field in the table to base the join on:</StepLabel>
              <SelectBox $inset><select id="key"><option>parcelnumber</option></select><Chevron /></SelectBox>
              <Options>
                <legend>Join Options</legend>
                <Option><Radio type="radio" name="keep" />Keep all records</Option>
                <Note>
                  All records in the target table are shown in the resulting table.<br />
                  Unmatched records will contain null values for all fields being<br />
                  appended into the target table from the join table.
                </Note>
                <Option $before={27}><Radio type="radio" name="keep" defaultChecked />Keep only matching records</Option>
                <Note>
                  If a record in the target table doesn't have a match in the join<br />
                  table, that record is removed from the resulting target table.
                </Note>
              </Options>
              <PanelActions><PushButton type="button" $w={130}>Validate Join</PushButton></PanelActions>
            </Panel>
            <Footer>
              <a href="#about">About joining data</a>
              <PushButton type="submit">OK</PushButton>
              <PushButton type="button">Cancel</PushButton>
            </Footer>
          </DialogBody>
          <Highlight $box={[1, 90, 192, 38]} />
          <Highlight $box={[33, 159, 97, 32]} />
          <Highlight $box={[31, 218, 280, 56]} />
          <Highlight $box={[37, 305, 124, 33]} />
          <Highlight $box={[30, 433, 175, 29]} />
        </Dialog>

        <CornerWindow>
          <CornerHeader><HeaderButton aria-label="Close window"><Cross /></HeaderButton></CornerHeader>
        </CornerWindow>
      </Desktop>
    </>
  );
}
